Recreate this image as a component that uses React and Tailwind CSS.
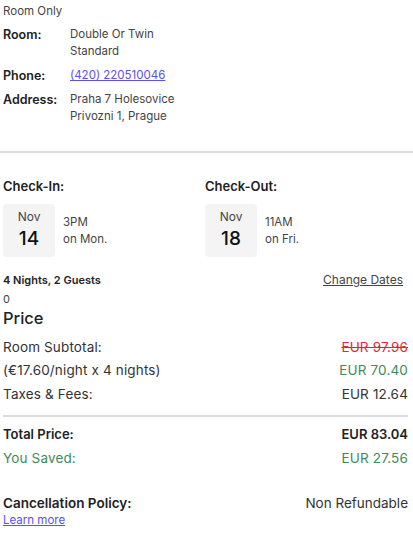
export default function App() {
  return (
    <div className="w-[413px] min-h-[536px] bg-white font-['Inter',sans-serif] text-[#333]">
      {/* Room details */}
      <div className="pl-[3px] pr-[5px] pt-[3px]">
        <p className="text-[11.5px] leading-[16px] text-[#444]">Room Only</p>
        <div className="mt-[7px] grid grid-cols-[67px_1fr] gap-y-[7px] text-[11.5px] leading-[17px]">
          <span className="font-semibold text-[12.5px] text-[#222]">Room:</span>
          <span className="text-[#444]">Double Or Twin<br />Standard</span>
          <span className="font-semibold text-[12.5px] text-[#222]">Phone:</span>
          <a href="#" className="text-[#5a4ff0] underline">(420) 220510046</a>
          <span className="font-semibold text-[12.5px] text-[#222]">Address:</span>
          <span className="text-[#444]">Praha 7 Holesovice<br />Privozni 1, Prague</span>
        </div>
      </div>

      <div className="mt-[26px] h-[2px] bg-[#dcdcdc]" />

      <div className="pl-[3px] pr-[5px]">
        {/* Check in / out */}
        <div className="mt-[24px] grid grid-cols-[202px_1fr]">
          {[
            { label: 'Check-In:', day: '14', time: '3PM', dow: 'on Mon.' },
            { label: 'Check-Out:', day: '18', time: '11AM', dow: 'on Fri.' },
          ].map((c) => (
            <div key={c.label}>
              <p className="text-[13px] leading-[18px] font-semibold text-[#222]">{c.label}</p>
              <div className="mt-[9px] flex items-center gap-[8px]">
                <div className="w-[52px] h-[53px] rounded-[4px] bg-[#f4f4f4] flex flex-col items-center pt-[5px]">
                  <span className="text-[12px] leading-[16px] text-[#444]">Nov</span>
                  <span className="mt-[2px] text-[19px] leading-[24px] font-medium text-[#111]">{c.day}</span>
                </div>
                <div className="text-[11.5px] leading-[17px] text-[#444]">
                  <p>{c.time}</p>
                  <p>{c.dow}</p>
                </div>
              </div>
            </div>
          ))}
        </div>

        <div className="mt-[15px] flex justify-between items-center text-[11px] leading-[16px]">
          <span className="font-semibold text-[#222]">4 Nights, 2 Guests</span>
          <a href="#" className="mr-[5px] text-[12px] text-[#444] underline">Change Dates</a>
        </div>
        <p className="mt-[3px] text-[11px] leading-[16px] text-[#444]">0</p>
        <h2 className="text-[16.5px] leading-[22px] font-medium text-[#222]">Price</h2>

        <div className="mt-[8px] text-[13.5px] leading-[20px] tracking-[0.15px] text-[#333]">
          <div className="flex justify-between">
            <span>Room Subtotal:</span>
            <span className="text-[#e3262b] line-through">EUR 97.96</span>
          </div>
          <div className="mt-[3px] flex justify-between">
            <span>(€17.60/night x 4 nights)</span>
            <span className="text-[#3d8b59]">EUR 70.40</span>
          </div>
          <div className="mt-[4px] flex justify-between">
            <span>Taxes &amp; Fees:</span>
            <span>EUR 12.64</span>
          </div>
        </div>

        <div className="mt-[11px] h-[2px] bg-[#dcdcdc]" />

        <div className="mt-[7px] text-[13px] leading-[20px]">
          <div className="flex justify-between font-semibold text-[#222]">
            <span>Total Price:</span>
            <span>EUR 83.04</span>
          </div>
          <div className="mt-[4px] flex justify-between text-[13.5px] tracking-[0.15px] text-[#3d8b59]">
            <span>You Saved:</span>
            <span>EUR 27.56</span>
          </div>
        </div>

        <div className="mt-[25px] flex justify-between text-[13.5px] leading-[20px]">
          <span className="font-semibold text-[#222]">Cancellation Policy:</span>
          <span className="text-[#333]">Non Refundable</span>
        </div>
        <a href="#" className="-mt-[1px] block text-[11.5px] leading-[16px] text-[#5a4ff0] underline">Learn more</a>
      </div>
    </div>
  );
}
